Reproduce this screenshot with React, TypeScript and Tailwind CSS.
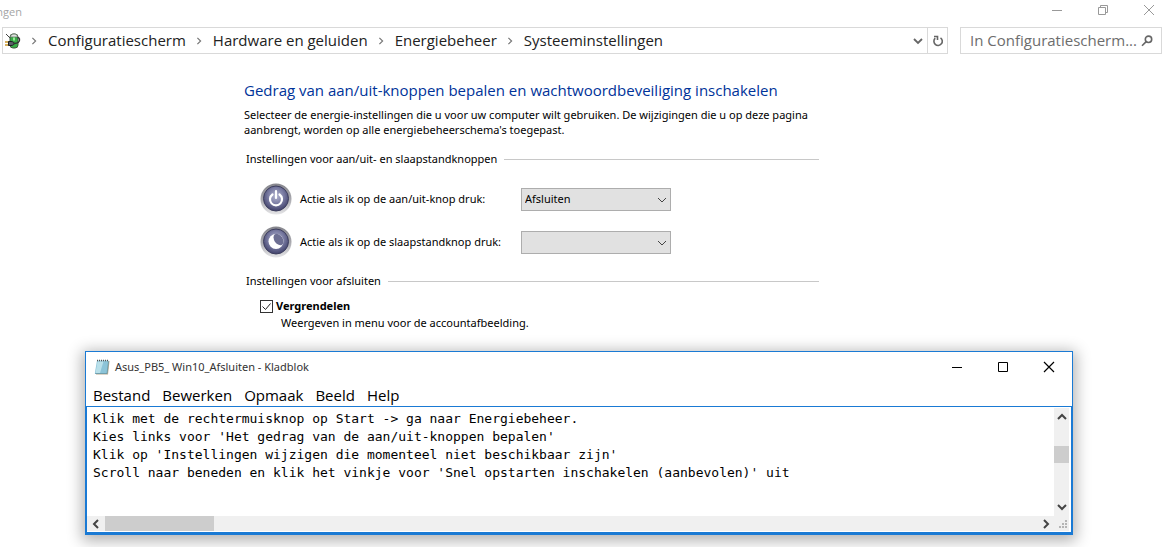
import type { ReactNode } from "react";

const crumbs = ["Configuratiescherm", "Hardware en geluiden", "Energiebeheer", "Systeeminstellingen"];

const menus = ["Bestand", "Bewerken", "Opmaak", "Beeld", "Help"];

const note = `Klik met de rechtermuisknop op Start -> ga naar Energiebeheer.
Kies links voor 'Het gedrag van de aan/uit-knoppen bepalen'
Klik op 'Instellingen wijzigen die momenteel niet beschikbaar zijn'
Scroll naar beneden en klik het vinkje voor 'Snel opstarten inschakelen (aanbevolen)' uit`;

function Chevron({ className }: { className: string }) {
  return (
    <svg viewBox="0 0 10 10" className={className} fill="none" stroke="currentColor">
      <path d="M1 3l4 4 4-4" />
    </svg>
  );
}

function PlugIcon() {
  return (
    <svg viewBox="0 0 16 16" className="size-4 shrink-0" fill="none">
      <rect x="5" y="1" width="8" height="14" rx="3" fill="#36ad45" stroke="#3d5a3d" />
      <path d="M5.500 4c0-2 1.500-3 3.500-3s3.500 1 3.500 3z" fill="#dfe3df" stroke="#6c736c" strokeWidth=".8" />
      <path d="M9 4.500v3" stroke="#9be89b" strokeWidth="2" />
      <path d="M1 1l4 4" stroke="#444" />
      <path d="M0 9h4M0 12h4" stroke="#c9962a" strokeWidth="1.400" />
      <path d="M3.500 8.500h2.500c2 0 3 .8 3 2s-1 2-3 2H3.500z" fill="#5a5f66" stroke="#1c1f22" />
      <path d="M9 10.500c4 0 6-2 5.500-4.500-.3-1-1-1.500-2-1.500" stroke="#333" strokeWidth="1.400" />
    </svg>
  );
}

function RoundIcon({ id, children }: { id: string; children: ReactNode }) {
  return (
    <svg viewBox="0 0 32 32" className="size-8 shrink-0">
      <defs>
        <linearGradient id={`${id}-rim`} x1="0" y1="0" x2="0" y2="1">
          <stop offset="0" stopColor="#85858c" />
          <stop offset=".5" stopColor="#a8a8ae" />
          <stop offset="1" stopColor="#e6e6e8" />
        </linearGradient>
        <radialGradient id={`${id}-face`} cx=".5" cy=".4" r=".6">
          <stop offset="0" stopColor="#b4b6d2" />
          <stop offset=".55" stopColor="#7779a0" />
          <stop offset="1" stopColor="#40416a" />
        </radialGradient>
      </defs>
      <circle cx="16" cy="16" r="15.500" fill={`url(#${id}-rim)`} />
      <circle cx="16" cy="15.500" r="12.500" fill={`url(#${id}-face)`} stroke="#3d3e5e" />
      {children}
    </svg>
  );
}

function Group({ title, children }: { title: string; children: ReactNode }) {
  return (
    <section>
      <h2 className="ml-[2px] flex items-center gap-[7px] leading-4">
        {title}
        <span className="h-px flex-1 bg-[#c8c8c8]" />
      </h2>
      {children}
    </section>
  );
}

function ActionRow({ id, label, icon, options }: { id: string; label: string; icon: ReactNode; options: string[] }) {
  return (
    <div className="ml-4 flex h-8 items-center">
      {icon}
      <label htmlFor={id} className="ml-2 w-[221px] whitespace-nowrap">
        {label}
      </label>
      <div className="relative">
        <select
          id={id}
          className="block h-[23px] w-[150px] appearance-none border border-[#adadad] bg-[#e1e1e1] pl-[3px] text-black"
        >
          {options.map((o) => (
            <option key={o}>{o}</option>
          ))}
        </select>
        <Chevron className="pointer-events-none absolute top-[7px] right-1 size-[10px] text-[#444]" />
      </div>
    </div>
  );
}

function ControlPanel() {
  return (
    <div className="font-['Open_Sans',sans-serif]">
      <header className="flex h-[27px] items-start justify-between text-[#999]">
        <div className="flex w-[22px] justify-end overflow-hidden pt-1 text-[11px] leading-4 text-[#a5a5a5]">ngen</div>
        <div className="mr-[19px] flex gap-[34px] pt-1">
          <button aria-label="Minimaliseren">
            <svg viewBox="0 0 12 12" className="size-3" stroke="currentColor">
              <path d="M1 6.500h10" />
            </svg>
          </button>
          <button aria-label="Verkleinen">
            <svg viewBox="0 0 12 12" className="size-3" fill="none" stroke="currentColor">
              <path d="M1.500 3.500h7v7h-7zM3.500 3.500v-2h7v7h-2" />
            </svg>
          </button>
          <button aria-label="Sluiten">
            <svg viewBox="0 0 12 12" className="size-3" stroke="currentColor">
              <path d="M1 1l10 10M11 1L1 11" />
            </svg>
          </button>
        </div>
      </header>

      <div className="mr-3 ml-[2px] flex h-[27px] gap-3 text-[15px]">
        <nav className="flex flex-1 items-center border border-[#d9d9d9] pl-[2px]">
          <PlugIcon />
          {crumbs.map((c) => (
            <span key={c} className="flex items-center">
              <Chevron className="mr-[10px] ml-[9px] size-2 -rotate-90 stroke-[1.500] text-[#777]" />
              <a href="#" className="whitespace-nowrap text-[#222]">
                {c}
              </a>
            </span>
          ))}
          <button aria-label="Vorige locaties" className="mr-1 ml-auto">
            <Chevron className="size-[10px] stroke-[1.800] text-[#666]" />
          </button>
          <button aria-label="Vernieuwen" className="flex h-full w-5 items-center justify-center border-l border-[#d9d9d9]">
            <svg viewBox="0 0 12 12" className="size-3 text-[#666]" fill="none" stroke="currentColor" strokeWidth="1.600">
              <path d="M8.500 2.800A4.200 4.200 0 1 1 3.200 3.200" />
              <path d="M2 1.500h3.500V5" />
            </svg>
          </button>
        </nav>
        <div className="flex w-[202px] items-center border border-[#d9d9d9] pr-2 pl-[9px]">
          <input
            aria-label="Zoeken"
            placeholder="In Configuratiescherm..."
            className="min-w-0 flex-1 outline-none placeholder:text-[#6d6d6d]"
          />
          <svg viewBox="0 0 12 12" className="size-3 shrink-0 text-[#666]" fill="none" stroke="currentColor" strokeWidth="1.600">
            <circle cx="7.500" cy="4.300" r="3.200" />
            <path d="M5.200 6.600L1 10.800" />
          </svg>
        </div>
      </div>

      <main className="ml-[244px] w-[575px] pt-[26px] font-['Noto_Sans',sans-serif] text-[11px]">
        <h1 className="font-['Open_Sans',sans-serif] text-[15px] leading-5 whitespace-nowrap text-[#003399]">
          Gedrag van aan/uit-knoppen bepalen en wachtwoordbeveiliging inschakelen
        </h1>
        <p className="mt-[7px] mb-[14px] leading-[15px]">
          Selecteer de energie-instellingen die u voor uw computer wilt gebruiken. De wijzigingen die u op deze pagina
          aanbrengt, worden op alle energiebeheerschema's toegepast.
        </p>

        <Group title="Instellingen voor aan/uit- en slaapstandknoppen">
          <div className="mt-4 mb-[15px] grid gap-[11px]">
            <ActionRow
              id="power"
              label="Actie als ik op de aan/uit-knop druk:"
              options={["Afsluiten"]}
              icon={
                <RoundIcon id="power-icon">
                  <path
                    d="M12.500 11.500a6 6 0 1 0 7 0M16 8v7"
                    fill="none"
                    stroke="#fff"
                    strokeWidth="2.200"
                    strokeLinecap="round"
                  />
                </RoundIcon>
              }
            />
            <ActionRow
              id="sleep"
              label="Actie als ik op de slaapstandknop druk:"
              options={[""]}
              icon={
                <RoundIcon id="sleep-icon">
                  <circle cx="16" cy="15.500" r="7.500" fill="#fff" />
                  <ellipse cx="18.500" cy="13.500" rx="4.200" ry="6.300" transform="rotate(-35 18.500 13.500)" fill="#6c6e92" />
                </RoundIcon>
              }
            />
          </div>
        </Group>

        <Group title="Instellingen voor afsluiten">
          <div className="mt-[9px] ml-4">
            <label className="flex items-center gap-[3px] leading-4 font-bold">
              <span className="relative">
                <input
                  type="checkbox"
                  defaultChecked
                  className="peer block size-[13px] appearance-none border border-[#333] bg-white"
                />
                <svg
                  viewBox="0 0 13 13"
                  className="pointer-events-none absolute inset-0 hidden size-[13px] peer-checked:block"
                  fill="none"
                  stroke="#222"
                >
                  <path d="M2.500 6.500l3 3 5-6" />
                </svg>
              </span>
              Vergrendelen
            </label>
            <p className="ml-[21px] leading-[18px]">Weergeven in menu voor de accountafbeelding.</p>
          </div>
        </Group>
      </main>
    </div>
  );
}

function Notepad() {
  return (
    <section className="mt-[19px] mr-[101px] ml-[85px] border border-[#1a7ad4] bg-white font-['Open_Sans',sans-serif] shadow-[0_3px_14px_3px_rgba(0,0,0,0.3)]">
      <header className="flex h-[30px] items-center pr-[17px] pl-2">
        <svg viewBox="0 0 16 16" className="size-4">
          <path d="M3.500 2h12l-1.500 13.500H2z" fill="#b7a98f" />
          <path d="M3 1.500h11.500L13 14.500H.8z" fill="#8cc4d8" />
          <path d="M3.500 2.500h6L6 14H1.500z" fill="#b9e0ea" />
          <path d="M3 1.500h12" stroke="#555" strokeWidth="1.600" strokeDasharray="1 1" />
          <path d="M1 14.500h12l1.500-12" stroke="#5b93a8" strokeWidth=".7" fill="none" />
        </svg>
        <h2 className="ml-[5px] flex-1 font-['Noto_Sans',sans-serif] text-[11px] text-[#333]">
          Asus_PB5_ Win10_Afsluiten - Kladblok
        </h2>
        <div className="flex gap-[34px] text-black">
          <button aria-label="Minimaliseren">
            <svg viewBox="0 0 12 12" className="size-3" stroke="currentColor">
              <path d="M1 6.500h10" />
            </svg>
          </button>
          <button aria-label="Maximaliseren">
            <svg viewBox="0 0 12 12" className="size-3" fill="none" stroke="currentColor">
              <path d="M1.500 1.500h9v9h-9z" />
            </svg>
          </button>
          <button aria-label="Sluiten">
            <svg viewBox="0 0 12 12" className="size-3" stroke="currentColor" strokeWidth="1.200">
              <path d="M1 1l10 10M11 1L1 11" />
            </svg>
          </button>
        </div>
      </header>

      <nav className="flex h-6 gap-3 pl-[7px] text-[15px] leading-[26px] text-black">
        {menus.map((m) => (
          <button key={m}>{m}</button>
        ))}
      </nav>

      <div className="border border-b-2 border-[#1a7ad4] pt-px pr-[2px] pb-px">
        <div className="flex h-[108px]">
          <textarea
            aria-label="Tekst"
            wrap="off"
            spellCheck={false}
            defaultValue={note}
            className="block flex-1 resize-none overflow-hidden pt-[2px] pl-[6px] font-['DejaVu_Sans_Mono',monospace] text-[13px] leading-[18px] text-black outline-none"
          />
          <div className="flex w-[15px] flex-col items-center bg-[#f0f0f0] py-1 text-[#444]">
            <Chevron className="size-[10px] rotate-180 stroke-2" />
            <div className="mt-6 mb-auto h-[17px] w-full bg-[#cdcdcd]" />
            <Chevron className="size-[10px] stroke-2" />
          </div>
        </div>
        <div className="flex h-[15px] items-center bg-[#f0f0f0] pl-1 text-[#444]">
          <Chevron className="size-[10px] rotate-90 stroke-2" />
          <div className="mr-auto ml-1 h-full w-[109px] bg-[#cdcdcd]" />
          <Chevron className="mr-[6px] size-[10px] -rotate-90 stroke-2" />
          <svg viewBox="0 0 12 12" className="size-3 self-end" fill="#b5b5b5">
            <path d="M8 1h2v2H8zM5 4h2v2H5zM8 4h2v2H8zM2 7h2v2H2zM5 7h2v2H5zM8 7h2v2H8z" />
          </svg>
        </div>
      </div>
    </section>
  );
}

export default function App() {
  return (
    <div className="min-h-screen overflow-hidden bg-white text-black">
      <ControlPanel />
      <Notepad />
    </div>
  );
}
